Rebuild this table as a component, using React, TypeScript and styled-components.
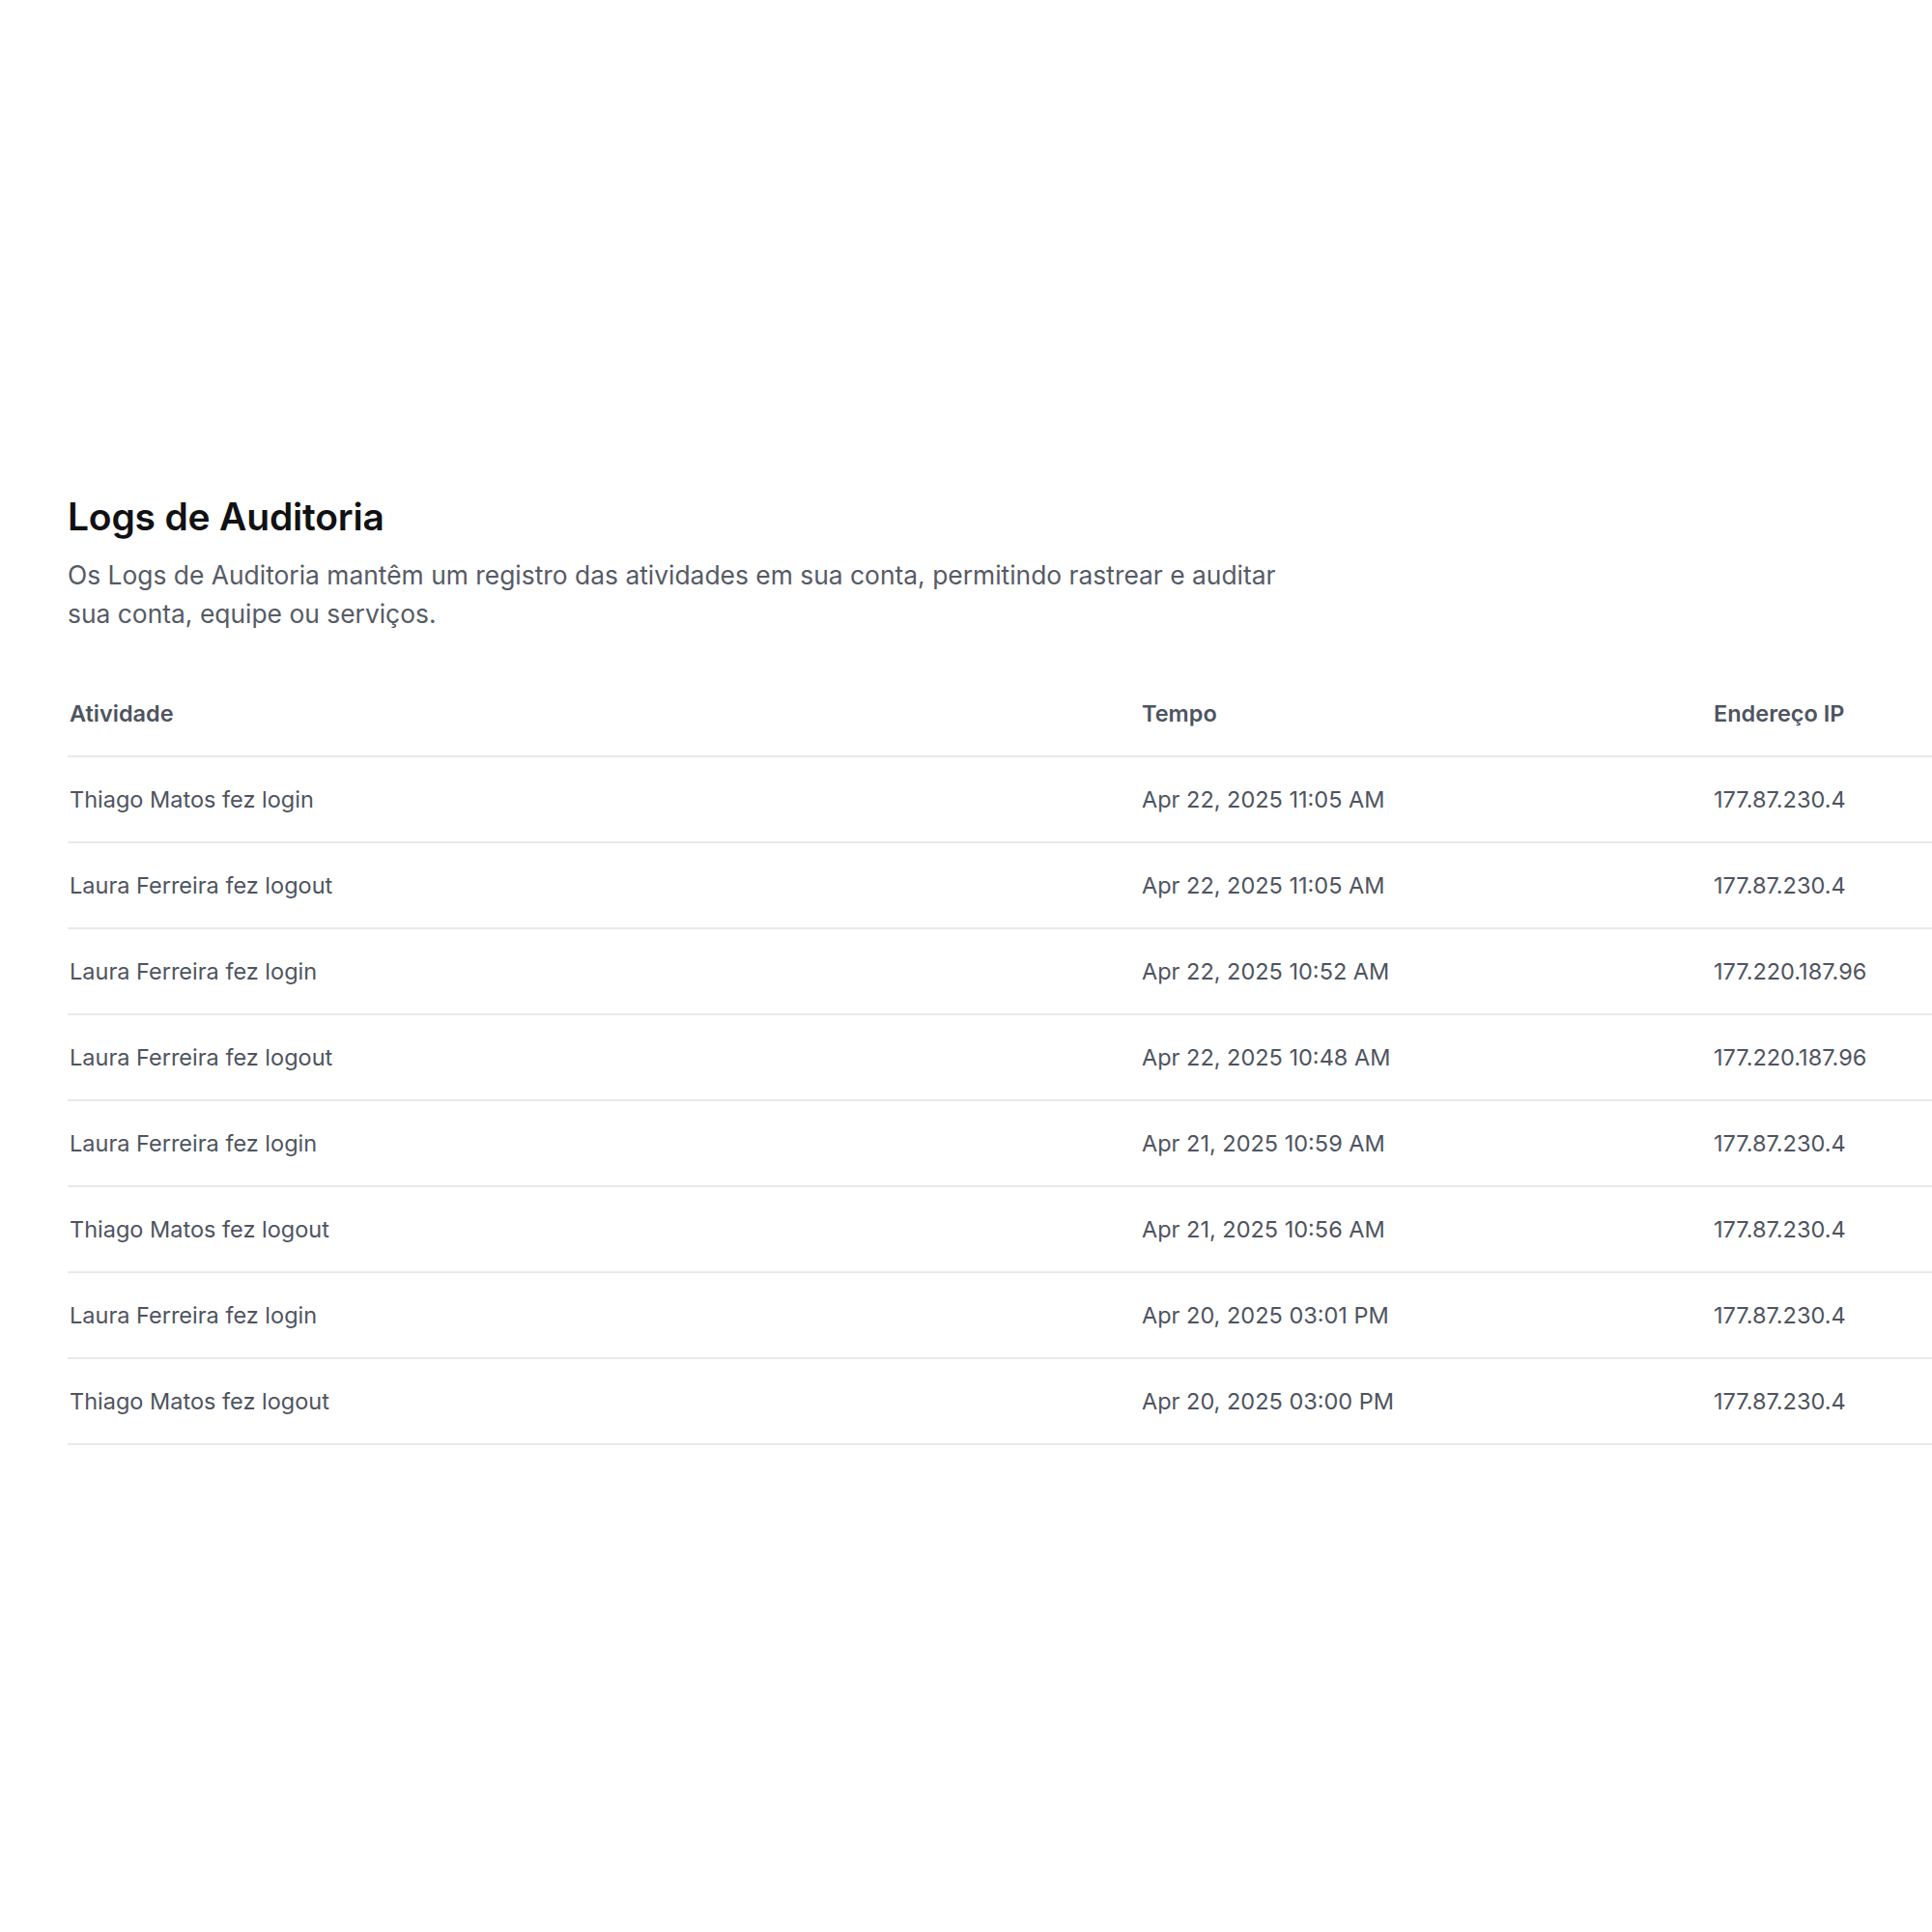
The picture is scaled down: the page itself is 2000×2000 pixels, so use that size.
import React from 'react'
import styled, { createGlobalStyle } from 'styled-components'

const GlobalStyle = createGlobalStyle`
    html, body {
        margin: 0;
        padding: 0;
        background: #ffffff;
        overflow: hidden;
    }
    body {
        font-family: Inter, "Noto Sans", sans-serif;
        -webkit-font-smoothing: antialiased;
    }
`

const Page = styled.div`
    width: 2000px;
    height: 2000px;
    box-sizing: border-box;
    padding: 512px 0 0 70px;
    overflow: hidden;
`

const Header = styled.div`
    display: flex;
    flex-direction: column;
    gap: 17px;
`

const Title = styled.h1`
    margin: 0;
    font-size: 39px;
    line-height: 46px;
    font-weight: 600;
    color: #111113;
    letter-spacing: -0.2px;
`

const Description = styled.p`
    margin: 0;
    max-width: 1275px;
    font-size: 26.4px;
    line-height: 40px;
    font-weight: 400;
    color: #565b66;
`

const Table = styled.div`
    width: 1960px;
    margin-top: 40px;
`

const Row = styled.div<{ $head?: boolean }>`
    display: grid;
    grid-template-columns: 1110px 592px 1fr;
    align-items: center;
    height: 89px;
    box-sizing: border-box;
    border-bottom: 2px solid #e8e9ec;
    color: #4e5460;
    font-size: 23.5px;
    font-weight: ${p => (p.$head ? 600 : 400)};
`

const Cell = styled.div`
    padding-left: 2px;
    white-space: nowrap;
`

const logs = [
    { activity: 'Thiago Matos fez login', time: 'Apr 22, 2025 11:05 AM', ip: '177.87.230.4' },
    { activity: 'Laura Ferreira fez logout', time: 'Apr 22, 2025 11:05 AM', ip: '177.87.230.4' },
    { activity: 'Laura Ferreira fez login', time: 'Apr 22, 2025 10:52 AM', ip: '177.220.187.96' },
    { activity: 'Laura Ferreira fez logout', time: 'Apr 22, 2025 10:48 AM', ip: '177.220.187.96' },
    { activity: 'Laura Ferreira fez login', time: 'Apr 21, 2025 10:59 AM', ip: '177.87.230.4' },
    { activity: 'Thiago Matos fez logout', time: 'Apr 21, 2025 10:56 AM', ip: '177.87.230.4' },
    { activity: 'Laura Ferreira fez login', time: 'Apr 20, 2025 03:01 PM', ip: '177.87.230.4' },
    { activity: 'Thiago Matos fez logout', time: 'Apr 20, 2025 03:00 PM', ip: '177.87.230.4' },
]

const App = () => {
    return (
        <>
            <GlobalStyle />
            <Page>
                <Header>
                    <Title>Logs de Auditoria</Title>
                    <Description>
                        Os Logs de Auditoria mantêm um registro das atividades em sua conta, permitindo rastrear e auditar sua conta, equipe ou serviços.
                    </Description>
                </Header>
                <Table>
                    <Row $head>
                        <Cell>Atividade</Cell>
                        <Cell>Tempo</Cell>
                        <Cell>Endereço IP</Cell>
                    </Row>
                    {logs.map((log, i) => (
                        <Row key={i}>
                            <Cell>{log.activity}</Cell>
                            <Cell>{log.time}</Cell>
                            <Cell>{log.ip}</Cell>
                        </Row>
                    ))}
                </Table>
            </Page>
        </>
    )
}

export default App
